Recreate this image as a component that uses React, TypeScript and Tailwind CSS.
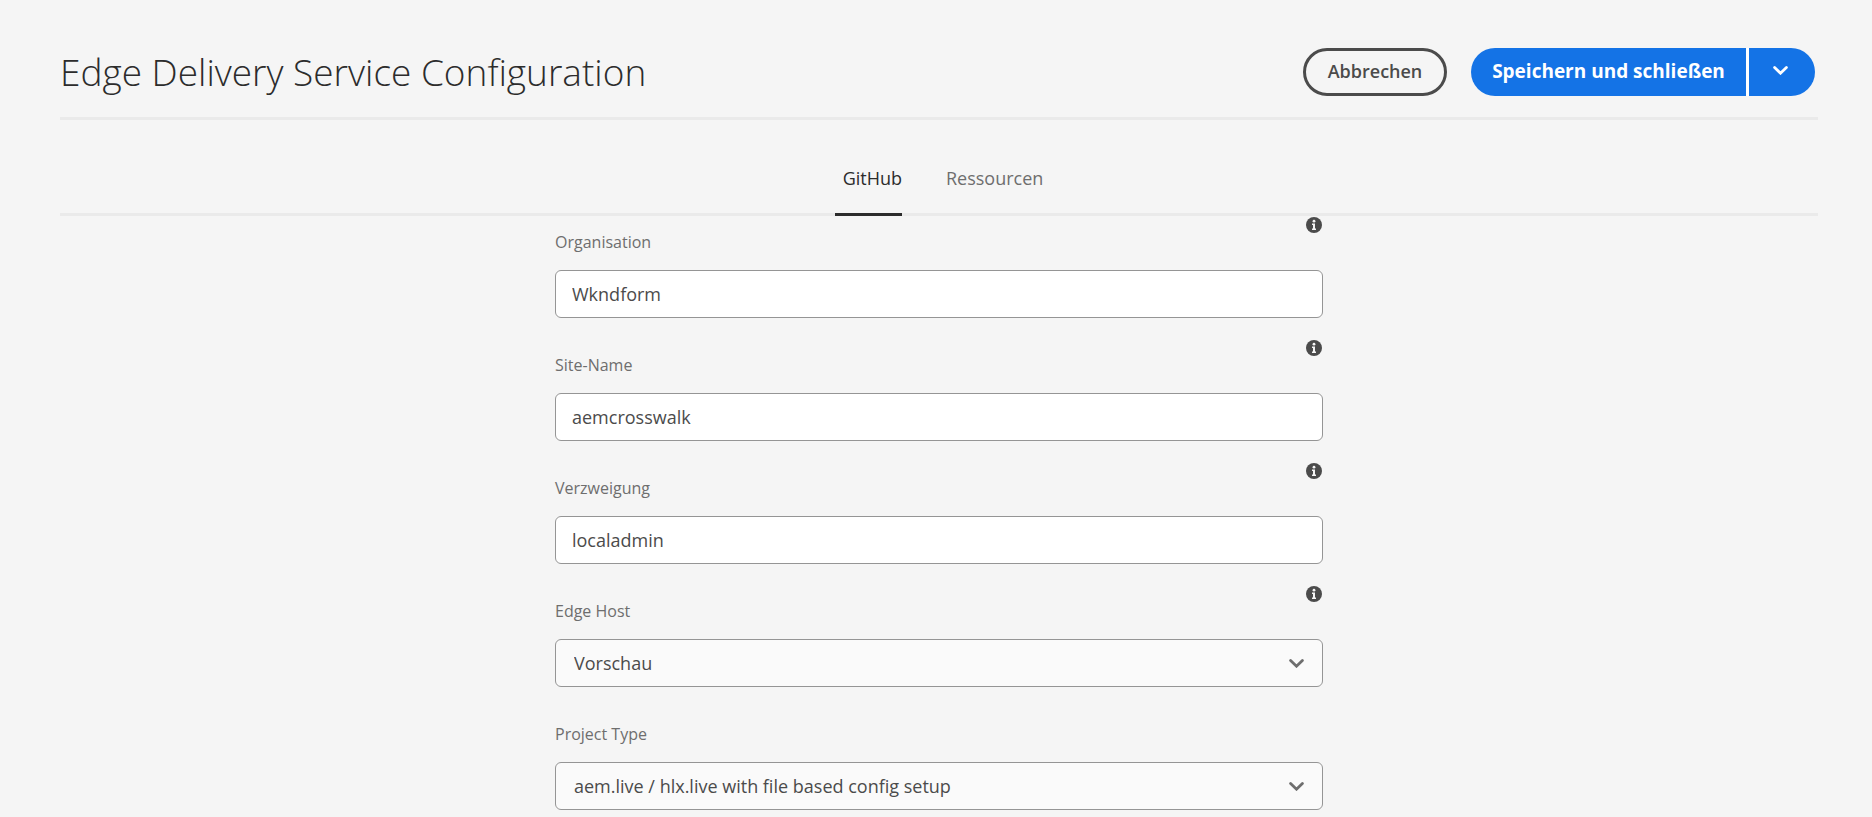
import { useState } from "react";

function Chevron({ className }: { className: string }) {
  return (
    <svg viewBox="0 0 15 9" fill="none" stroke="currentColor" strokeWidth="2.8" strokeLinecap="round" aria-hidden="true" className={className}>
      <path d="M1.6 1.5L7.5 7.2L13.4 1.5" />
    </svg>
  );
}

function InfoIcon() {
  return (
    <svg viewBox="0 0 16 16" className="size-4" aria-hidden="true">
      <circle cx="8" cy="8" r="8" fill="#4b4b4b" />
      <circle cx="8" cy="4.2" r="1.4" fill="#f5f5f5" />
      <path d="M6 6.5H9V11.5H10V13H6V11.5H7V8H6Z" fill="#f5f5f5" />
    </svg>
  );
}

type FieldDef = { id: string; label: string; value: string; options?: string[]; info: boolean };

const fields: FieldDef[] = [
  { id: "org", label: "Organisation", value: "Wkndform", info: true },
  { id: "site", label: "Site-Name", value: "aemcrosswalk", info: true },
  { id: "branch", label: "Verzweigung", value: "localadmin", info: true },
  { id: "host", label: "Edge Host", value: "Vorschau", options: ["Vorschau"], info: true },
  {
    id: "type",
    label: "Project Type",
    value: "aem.live / hlx.live with file based config setup",
    options: ["aem.live / hlx.live with file based config setup"],
    info: false,
  },
];

function Field({ field }: { field: FieldDef }) {
  return (
    <div>
      <div className="flex h-[54px] items-start justify-between pt-px">
        <label htmlFor={field.id} className="pt-3 text-[16px] leading-[26px] text-[#6e6e6e]">
          {field.label}
        </label>
        {field.info && (
          <button type="button" aria-label={"Info: " + field.label} className="mr-px">
            <InfoIcon />
          </button>
        )}
      </div>
      {field.options ? (
        <div className="relative">
          <select
            id={field.id}
            defaultValue={field.value}
            className="block h-12 w-full appearance-none rounded-md border border-[#959595] bg-[#fafafa] px-[18px] text-[18px] text-[#4b4b4b]"
          >
            {field.options.map((option) => (
              <option key={option}>{option}</option>
            ))}
          </select>
          <Chevron className="pointer-events-none absolute top-5 right-[19px] h-[9px] w-[15px] text-[#6e6e6e]" />
        </div>
      ) : (
        <input
          id={field.id}
          type="text"
          defaultValue={field.value}
          className="block h-12 w-full rounded-md border border-[#959595] bg-white px-4 text-[18px] text-[#4b4b4b]"
        />
      )}
    </div>
  );
}

export default function App() {
  const [tab, setTab] = useState("GitHub");
  return (
    <div className="min-h-screen bg-[#f5f5f5] pr-[54px] pl-[60px] font-['Open_Sans','Noto_Sans',sans-serif] text-[#4b4b4b]">
      <header className="flex h-[120px] items-start justify-between border-b-3 border-[#eaeaea] pt-12 pr-[3px]">
        <h1 className="text-[37px] leading-12 font-light text-[#2c2c2c]">Edge Delivery Service Configuration</h1>
        <div className="flex gap-6">
          <button type="button" className="h-12 w-36 rounded-full border-3 border-[#4b4b4b] pb-0.5 text-[18px] font-semibold">
            Abbrechen
          </button>
          <div className="flex text-white">
            <button type="button" className="h-12 w-[275px] rounded-l-full bg-[#1473e6] pb-0.5 text-[19px] font-bold">
              Speichern und schließen
            </button>
            <div className="w-[3px] bg-white" />
            <button type="button" aria-label="Weitere Optionen" className="flex h-12 w-[66px] items-center justify-center rounded-r-full bg-[#1473e6] pr-[3px] pb-[3px]">
              <Chevron className="h-[9px] w-[15px]" />
            </button>
          </div>
        </div>
      </header>
      <nav role="tablist" className="flex h-24 justify-center gap-9 border-b-3 border-[#eaeaea]">
        {["GitHub", "Ressourcen"].map((name) => (
          <button
            key={name}
            type="button"
            role="tab"
            aria-selected={tab === name}
            onClick={() => setTab(name)}
            className={
              tab === name
                ? "-mb-[3px] border-b-3 border-[#2c2c2c] pb-4 pl-2 pt-10 text-[18px] text-[#2c2c2c]"
                : "-mb-[3px] border-b-3 border-transparent pb-4 pl-2 pt-10 text-[18px] text-[#6e6e6e]"
            }
          >
            {name}
          </button>
        ))}
      </nav>
      <form className="mx-auto flex max-w-3xl flex-col gap-[21px]">
        {fields.map((field) => (
          <Field key={field.id} field={field} />
        ))}
      </form>
    </div>
  );
}
